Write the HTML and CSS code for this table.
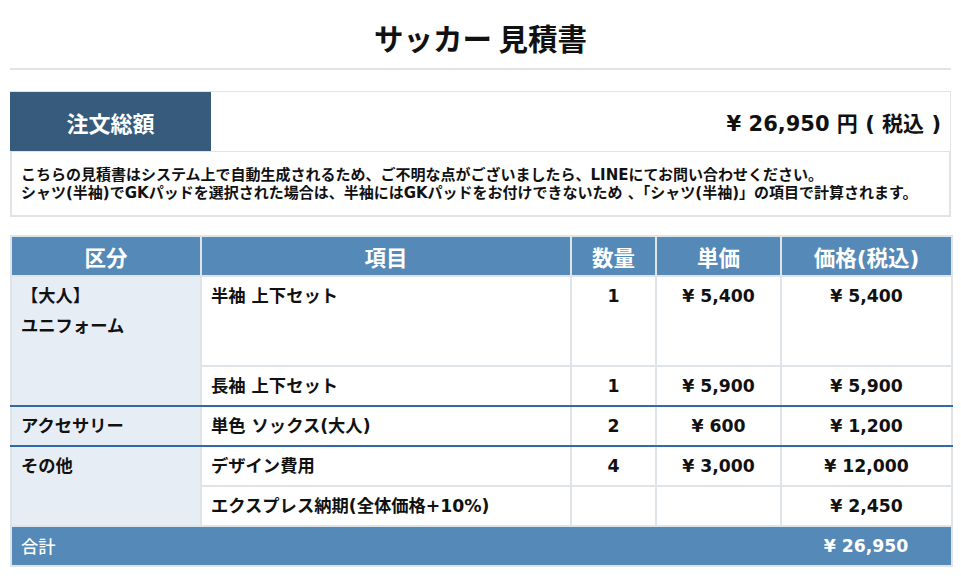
FILE: index.html
```html
<!DOCTYPE html>
<html lang="ja">
<head>
<meta charset="utf-8">
<title>サッカー 見積書</title>
<link rel="stylesheet" href="styles.css">
</head>
<body>
<h1 class="title">サッカー 見積書</h1>

<section class="summary">
  <div class="total">
    <div class="total-label">注文総額</div>
    <div class="total-value">¥ 26,950 円 ( 税込 )</div>
  </div>
  <div class="notes">
    <p>こちらの見積書はシステム上で自動生成されるため、ご不明な点がございましたら、LINEにてお問い合わせください。</p>
    <p>シャツ(半袖)でGKパッドを選択された場合は、半袖にはGKパッドをお付けできないため 、「シャツ(半袖)」の項目で計算されます。</p>
  </div>
</section>

<table class="quote">
  <colgroup>
    <col class="c-cat">
    <col class="c-item">
    <col class="c-qty">
    <col class="c-unit">
    <col class="c-price">
  </colgroup>
  <thead>
    <tr><th>区分</th><th>項目</th><th>数量</th><th>単価</th><th>価格(税込)</th></tr>
  </thead>
  <tbody>
    <tr class="tall">
      <td class="cat cat-two end-cell" rowspan="2">【大人】<br>ユニフォーム</td>
      <td>半袖 上下セット</td><td class="num">1</td><td class="num">¥ 5,400</td><td class="num">¥ 5,400</td>
    </tr>
    <tr class="end">
      <td>長袖 上下セット</td><td class="num">1</td><td class="num">¥ 5,900</td><td class="num">¥ 5,900</td>
    </tr>
    <tr class="end">
      <td class="cat">アクセサリー</td>
      <td>単色 ソックス(大人)</td><td class="num">2</td><td class="num">¥ 600</td><td class="num">¥ 1,200</td>
    </tr>
    <tr>
      <td class="cat" rowspan="2">その他</td>
      <td>デザイン費用</td><td class="num">4</td><td class="num">¥ 3,000</td><td class="num">¥ 12,000</td>
    </tr>
    <tr>
      <td>エクスプレス納期(全体価格+10%)</td><td class="num"></td><td class="num"></td><td class="num">¥ 2,450</td>
    </tr>
  </tbody>
  <tfoot>
    <tr><td class="sum-label" colspan="4">合計</td><td class="sum-value">¥ 26,950</td></tr>
  </tfoot>
</table>
</body>
</html>
```

FILE: styles.css
```css
html, body {
  margin: 0;
  padding: 0;
  background: #ffffff;
}

body {
  padding: 0 10px;
  font-family: "DejaVu Sans", "Noto Sans CJK JP", sans-serif;
  color: #111111;
}

.title {
  margin: 0 0 21px;
  padding: 19px 0 13px;
  font-family: "Noto Sans CJK JP", sans-serif;
  font-size: 29.5px;
  line-height: 36px;
  font-weight: 700;
  text-align: center;
  border-bottom: 2px solid #dfe4e9;
}

.total {
  display: flex;
  align-items: stretch;
  height: 61px;
  border: 1px solid #dfe4e9;
  border-left: none;
  box-sizing: border-box;
}

.total-label {
  width: 201px;
  flex: 0 0 201px;
  background: #365b7c;
  color: #ffffff;
  font-size: 22px;
  font-weight: 700;
  display: flex;
  align-items: center;
  justify-content: center;
}

.total-value {
  flex: 1;
  display: flex;
  align-items: center;
  justify-content: flex-end;
  padding-right: 9px;
  font-size: 21px;
  font-weight: 700;
}

.notes {
  border: 2px solid #dfe4e9;
  border-top: none;
  padding: 14px 9px 13px;
  font-size: 15px;
  line-height: 18px;
  font-weight: 700;
}

.notes p {
  margin: 0;
  white-space: nowrap;
}

.quote {
  margin-top: 18px;
  width: 941px;
  border-collapse: collapse;
  table-layout: fixed;
  border: 2px solid #dfe4e9;
}

.c-cat { width: 190px; }
.c-item { width: 370px; }
.c-qty { width: 85px; }
.c-unit { width: 125px; }
.c-price { width: 171px; }

.quote th,
.quote td {
  border: 2px solid #dfe4e9;
}

.quote th {
  height: 38px;
  padding: 0;
  background: #5589b8;
  color: #ffffff;
  font-size: 21.5px;
  font-weight: 700;
  text-align: center;
  vertical-align: middle;
}

.quote td {
  padding: 9px 9px;
  font-size: 17.3px;
  line-height: 20px;
  font-weight: 700;
  vertical-align: top;
  background: #ffffff;
  white-space: nowrap;
}

.quote .tall td {
  height: 70px;
}

.quote td.cat {
  background: #e7edf4;
}

.quote td.cat-two {
  padding-top: 4px;
  line-height: 30px;
}

.quote td.num {
  text-align: center;
}

.quote tr.end td,
.quote td.end-cell {
  border-bottom-color: #2f6aa3;
}

.quote tfoot td {
  height: 20px;
  padding: 9px 9px;
  background: #5589b8;
  color: #ffffff;
}

.quote tfoot td.sum-label {
  font-family: "Noto Sans CJK JP", sans-serif;
  font-weight: 500;
  border-right: none;
}

.quote tfoot td.sum-value {
  text-align: center;
  border-left: none;
}
```
